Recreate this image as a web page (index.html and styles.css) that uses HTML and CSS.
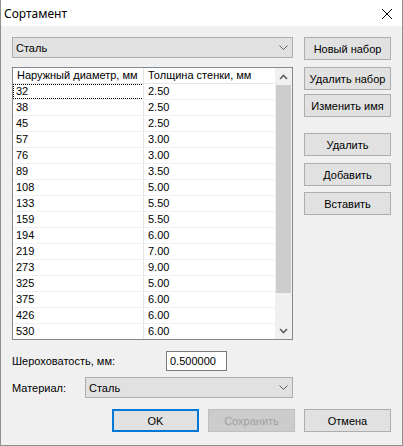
FILE: index.html
```html
<!DOCTYPE html>
<html>
<head>
<meta charset="utf-8">
<link rel="stylesheet" href="styles.css">
</head>
<body>
<div class="window">
  <div class="titlebar">
    <span class="title">Сортамент</span>
    <svg class="close" width="12" height="12" viewBox="0 0 12 12"><path d="M1 1 L11 11 M11 1 L1 11" stroke="#000" stroke-width="1" fill="none"/></svg>
  </div>
  <div class="body">
    <div class="main">
      <div class="left">
        <div class="combo combo-top">
          <span>Сталь</span>
          <svg class="chev" width="9" height="6" viewBox="0 0 9 6"><path d="M0.5 0.5 L4.5 4.5 L8.5 0.5" stroke="#606060" stroke-width="1" fill="none"/></svg>
        </div>
        <div class="list">
          <div class="grid">
            <div class="hrow"><div class="hc c1">Наружный диаметр, мм</div><div class="hc c2">Толщина стенки, мм</div></div>
            <div class="row"><div class="cell c1 focus">32</div><div class="cell c2">2.50</div></div>
            <div class="row"><div class="cell c1">38</div><div class="cell c2">2.50</div></div>
            <div class="row"><div class="cell c1">45</div><div class="cell c2">2.50</div></div>
            <div class="row"><div class="cell c1">57</div><div class="cell c2">3.00</div></div>
            <div class="row"><div class="cell c1">76</div><div class="cell c2">3.00</div></div>
            <div class="row"><div class="cell c1">89</div><div class="cell c2">3.50</div></div>
            <div class="row"><div class="cell c1">108</div><div class="cell c2">5.00</div></div>
            <div class="row"><div class="cell c1">133</div><div class="cell c2">5.50</div></div>
            <div class="row"><div class="cell c1">159</div><div class="cell c2">5.50</div></div>
            <div class="row"><div class="cell c1">194</div><div class="cell c2">6.00</div></div>
            <div class="row"><div class="cell c1">219</div><div class="cell c2">7.00</div></div>
            <div class="row"><div class="cell c1">273</div><div class="cell c2">9.00</div></div>
            <div class="row"><div class="cell c1">325</div><div class="cell c2">5.00</div></div>
            <div class="row"><div class="cell c1">375</div><div class="cell c2">6.00</div></div>
            <div class="row"><div class="cell c1">426</div><div class="cell c2">6.00</div></div>
            <div class="row"><div class="cell c1">530</div><div class="cell c2">6.00</div></div>
          </div>
          <div class="scrollbar">
            <div class="arrow"><svg width="9" height="6" viewBox="0 0 9 6"><path d="M1 5 L4.5 1.5 L8 5" stroke="#606060" stroke-width="1.6" fill="none"/></svg></div>
            <div class="track"><div class="thumb"></div></div>
            <div class="arrow"><svg width="9" height="6" viewBox="0 0 9 6"><path d="M1 1 L4.5 4.5 L8 1" stroke="#606060" stroke-width="1.6" fill="none"/></svg></div>
          </div>
        </div>
        <div class="field-row rough">
          <span class="label">Шероховатость, мм:</span>
          <div class="input">0.500000</div>
        </div>
        <div class="field-row mat">
          <span class="label">Материал:</span>
          <div class="combo combo-mat">
            <span>Сталь</span>
            <svg class="chev" width="9" height="6" viewBox="0 0 9 6"><path d="M0.5 0.5 L4.5 4.5 L8.5 0.5" stroke="#606060" stroke-width="1" fill="none"/></svg>
          </div>
        </div>
      </div>
      <div class="right">
        <div class="btn">Новый набор</div>
        <div class="btn b2">Удалить набор</div>
        <div class="btn b3">Изменить имя</div>
        <div class="btn b4">Удалить</div>
        <div class="btn b5">Добавить</div>
        <div class="btn b6">Вставить</div>
      </div>
    </div>
    <div class="actions">
      <div class="btn default">OK</div>
      <div class="btn disabled">Сохранить</div>
      <div class="btn">Отмена</div>
    </div>
  </div>
</div>
</body>
</html>
```

FILE: styles.css
```css
* { box-sizing: border-box; }
html, body { margin: 0; padding: 0; background: #f0f0f0; }
.window {
  width: 403px;
  height: 446px;
  border: 1px solid #8f8f8f;
  border-top: none;
  background: #f0f0f0;
  display: flex;
  flex-direction: column;
  font-family: "Liberation Sans", Arial, sans-serif;
  font-size: 11px;
  color: #000;
}
.titlebar {
  height: 26px;
  background: #fff;
  display: flex;
  align-items: center;
  justify-content: space-between;
  padding: 0 9px 0 3px;
  flex: none;
}
.title {
  font-family: "Noto Sans", "Open Sans", sans-serif;
  font-size: 12px;
}
.close { display: block; margin-top: 1px; }
.body {
  flex: 1;
  padding: 11px 11px 0 11px;
}
.main {
  display: grid;
  grid-template-columns: 281px 87px;
  column-gap: 11px;
}
.left { display: flex; flex-direction: column; }
.combo {
  height: 21px;
  background: #e1e1e1;
  border: 1px solid #adadad;
  display: flex;
  align-items: center;
  justify-content: space-between;
  padding: 0 4px 0 3px;
}
.chev { display: block; }
.list {
  margin-top: 9px;
  height: 273px;
  border: 1px solid #828790;
  background: #fff;
  display: flex;
  overflow: hidden;
}
.grid { width: 262px; flex: none; }
.hrow {
  display: flex;
  height: 16px;
  border-bottom: 1px solid #e5e5e5;
}
.hc {
  line-height: 15px;
  padding-left: 4px;
  white-space: nowrap;
}
.c1 { width: 131px; border-right: 1px solid #e5e5e5; flex: none; }
.c2 { width: 131px; flex: none; }
.row {
  display: flex;
  height: 16px;
  border-bottom: 1px solid #f0f0f0;
}
.cell { line-height: 15px; padding-left: 3px; }
.cell.c2 { padding-left: 4px; }
.focus {
  background:
    repeating-linear-gradient(90deg, #000 0 1px, transparent 1px 2px) left top / 100% 1px no-repeat,
    repeating-linear-gradient(90deg, #000 0 1px, transparent 1px 2px) left bottom / 100% 1px no-repeat,
    repeating-linear-gradient(180deg, #000 0 1px, transparent 1px 2px) left top / 1px 100% no-repeat,
    repeating-linear-gradient(180deg, #000 0 1px, transparent 1px 2px) right top / 1px 100% no-repeat;
  background-origin: border-box;
  background-clip: border-box;
}
.scrollbar {
  width: 17px;
  flex: none;
  background: #f0f0f0;
  display: flex;
  flex-direction: column;
}
.arrow {
  height: 17px;
  display: flex;
  align-items: center;
  justify-content: center;
  flex: none;
}
.track { flex: 1; }
.thumb {
  height: 208px;
  background: #cdcdcd;
  margin: 0 1px;
}
.field-row { display: flex; align-items: center; }
.rough { margin-top: 11px; }
.rough .label { width: 154px; }
.input {
  width: 61px;
  height: 20px;
  background: #fff;
  border: 1px solid #7a7a7a;
  line-height: 18px;
  padding-left: 3px;
}
.mat { margin-top: 6px; }
.mat .label { width: 73px; }
.combo-mat { width: 208px; }
.right { display: flex; flex-direction: column; }
.btn {
  height: 23px;
  width: 87px;
  background: #e1e1e1;
  border: 1px solid #adadad;
  display: flex;
  align-items: center;
  justify-content: center;
  white-space: nowrap;
  flex: none;
}
.b2 { margin-top: 7px; }
.b3 { margin-top: 4px; }
.b4 { margin-top: 16px; }
.b5 { margin-top: 7px; }
.b6 { margin-top: 6px; }
.actions {
  margin-top: 11px;
  display: flex;
  justify-content: flex-end;
  gap: 9px;
}
.btn.default { border: 2px solid #0078d7; }
.btn.disabled {
  background: #cccccc;
  border-color: #bfbfbf;
  color: #a0a0a0;
}
```
